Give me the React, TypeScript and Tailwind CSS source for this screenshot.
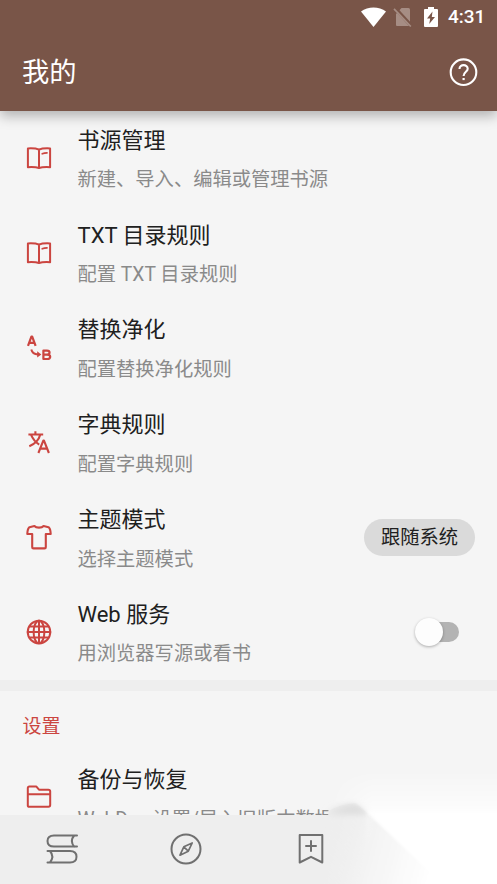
import type { ReactNode } from "react";

const line = {
  fill: "none",
  stroke: "currentColor",
  strokeWidth: 2,
  strokeLinejoin: "round" as const,
  strokeLinecap: "round" as const,
};

function BookIcon() {
  return (
    <svg width="26" height="26" viewBox="0 0 26 26" {...line}>
      <path d="M13 4.6C10 3.2 6 3.2 1.9 3.4V22.2C6 22 10 22 13 23C16 22 20 22 24.1 22.2V3.4C20 3.2 16 3.2 13 4.6ZM13 4.6V23" />
      <path d="M16.2 8.8C17.8 8.2 19.4 7.9 21 7.8" strokeWidth="1.7" />
    </svg>
  );
}

function ReplaceIcon() {
  return (
    <svg width="26" height="26" viewBox="0 0 26 26" {...line}>
      <path d="M2 10.8L5.4 1.6H6.2L9.6 10.8M3.2 7.8H8.4" strokeWidth="2.2" strokeLinecap="butt" />
      <path d="M5.3 14.6C6 17.5 8.3 19.4 12 19.6" strokeLinecap="butt" />
      <path d="M11.2 16.2L15.3 19.6L11.2 22.6Z" fill="currentColor" stroke="none" />
      <path d="M17.4 15.6V24M17.4 15.6H21C24.4 15.6 24.4 19.6 21 19.6H17.4M21 19.6C25.2 19.6 25.2 24 21.4 24H17.4" strokeWidth="2.2" />
    </svg>
  );
}

function TranslateIcon() {
  return (
    <svg width="26" height="26" viewBox="0 0 26 26" {...line} strokeLinecap="butt">
      <path d="M2.4 5.5H17.2M9.4 2.2V5.5M14.3 5.5C13 10.6 8.5 15 3.3 17.3M5.2 6.2C7 10.4 10 13.6 13.2 15.6" strokeWidth="2.1" />
      <path d="M12.4 24L17.3 11.6H18L22.9 24M14.2 19.6H21.2" strokeWidth="2.1" />
    </svg>
  );
}

function ShirtIcon() {
  return (
    <svg width="26" height="26" viewBox="0 0 26 26" {...line} strokeWidth="2.1">
      <path d="M8.4 2C10.2 4.2 15.8 4.2 17.6 2L22.5 3.2C23.8 4.2 24.6 7 24.7 10H19.8V23.2C19.8 24 19.4 24.4 18.6 24.4H7.4C6.6 24.4 6.2 24 6.2 23.2V10H1.3C1.4 7 2.2 4.2 3.5 3.2Z" />
    </svg>
  );
}

function GlobeIcon() {
  return (
    <svg width="26" height="26" viewBox="0 0 26 26" {...line}>
      <circle cx="13" cy="13" r="11.3" />
      <ellipse cx="13" cy="13" rx="5.4" ry="11.3" />
      <path d="M13 1.7V24.3M1.7 13H24.3M3.6 7.4H22.4M3.6 18.6H22.4" />
    </svg>
  );
}

function FolderIcon() {
  return (
    <svg width="26" height="26" viewBox="0 0 26 26" {...line}>
      <path d="M1.8 21.5V4.2C1.8 3.2 2.4 2.6 3.4 2.6H10.4L13 5.7H22.4C23.6 5.7 24.2 6.3 24.2 7.4V21.1C24.2 22.2 23.6 22.8 22.4 22.8H3.4C2.3 22.8 1.8 22.3 1.8 21.5ZM1.8 10.2H24.2" />
    </svg>
  );
}

function Row({ icon, title, sub, children }: { icon: ReactNode; title: string; sub: string; children?: ReactNode }) {
  return (
    <div className="flex h-[94.85px] shrink-0 items-center pl-[25.5px]">
      <div className="w-[52px] shrink-0 text-[#cb4540]">{icon}</div>
      <div className="flex-1 whitespace-nowrap">
        <div className="mt-[3.5px] h-[39.5px] text-[22px] leading-[39px] text-[#202020]">{title}</div>
        <div className="h-[38.5px] text-[19.3px] leading-[39px] text-[#8a8a8a]">{sub}</div>
      </div>
      {children}
    </div>
  );
}

function Header() {
  return (
    <header className="relative z-10 h-[110.5px] shrink-0 bg-[#795548] text-white shadow-[0_5px_12px_rgba(0,0,0,0.28)]">
      <div className="flex h-[34px] items-center pl-[361px]">
        <svg width="25" height="21" viewBox="0 0 25 21" fill="#fff">
          <path d="M0 4.5C7-1 18-1 25 4.5L12.5 20Z" />
        </svg>
        <svg className="ml-[7px]" width="20" height="22" viewBox="0 0 20 22">
          <path d="M3 8L8.5 2H15.5Q17 2 17 3.5V19Q17 20 16 20H4Q3 20 3 19Z" fill="#a68d84" />
          <path d="M1.5 1.5L19 20.5" stroke="#795548" strokeWidth="3.6" />
          <path d="M1 2.8L17.8 20.5" stroke="#a68d84" strokeWidth="1.7" />
        </svg>
        <svg className="ml-[11px]" width="14" height="22" viewBox="0 0 14 22">
          <path d="M4 1H10V3H13Q14 3 14 4V20Q14 21 13 21H1Q0 21 0 20V4Q0 3 1 3H4Z" fill="#fff" />
          <path d="M8.5 5.5L3 12.5H6.2L5.2 18L11 11H7.8Z" fill="#795548" />
        </svg>
        <span className="ml-[10px] text-[19px] font-medium leading-[34px]">4:31</span>
      </div>
      <div className="flex h-[76px] items-center justify-between pl-[22px] pr-[19px]">
        <h1 className="pt-[2px] text-[27.3px] leading-[40px]">我的</h1>
        <svg width="29" height="29" viewBox="0 0 29 29" fill="none" stroke="#fff" strokeWidth="2.1">
          <circle cx="14.5" cy="14.2" r="12.8" />
          <path d="M10.5 11C10.5 5.8 18.7 6 18.7 10.8C18.7 13.8 14.6 14 14.6 18" />
          <path d="M14.6 20V22.1" strokeWidth="2.2" />
        </svg>
      </div>
    </header>
  );
}

function BottomNav() {
  return (
    <nav className="flex h-[69.5px] shrink-0 items-center bg-[#eeeeee] pb-[1px] pl-[46px] text-[#707070]">
      <svg width="32" height="30" viewBox="0 0 32 30" {...line}>
        <path d="M31 1.5H8Q1.5 1.5 1.5 7T8 12.6H31M28.2 1.5Q23.5 7 28.2 12.6" />
        <path d="M1.5 17H24Q30.5 17 30.5 22.7T24 28.4H1.5M4 17Q8.7 22.7 4 28.4" />
      </svg>
      <svg className="ml-[92px]" width="32" height="32" viewBox="0 0 32 32" {...line}>
        <circle cx="16" cy="16" r="14.5" />
        <path d="M22.2 10L18.3 18.2L10 22.2L13.8 13.8ZM13.8 13.8L18.3 18.2" strokeWidth="1.7" />
      </svg>
      <svg className="ml-[95px]" width="28" height="32" viewBox="0 0 28 32" {...line}>
        <path d="M2.7 2H25.3V29.5L14 23.8L2.7 29.5Z" />
        <path d="M14 8V18M9 13H19" />
      </svg>
    </nav>
  );
}

function CornerGlow() {
  return (
    <svg className="pointer-events-none absolute bottom-0 right-0" width="197" height="124" viewBox="300 760 197 124">
      <defs>
        <linearGradient id="fade" gradientUnits="userSpaceOnUse" x1="400" y1="768" x2="400" y2="838">
          <stop offset="0" stopColor="#fff" stopOpacity="0" />
          <stop offset="0.4" stopColor="#fff" stopOpacity="0.45" />
          <stop offset="0.7" stopColor="#fff" stopOpacity="0.85" />
          <stop offset="1" stopColor="#fff" />
        </linearGradient>
        <linearGradient id="ramp" gradientUnits="userSpaceOnUse" x1="328" y1="0" x2="372" y2="0">
          <stop offset="0" stopColor="#fff" stopOpacity="0" />
          <stop offset="1" stopColor="#fff" />
        </linearGradient>
        <mask id="left" maskUnits="userSpaceOnUse" x="300" y="760" width="197" height="124">
          <rect x="300" y="760" width="197" height="124" fill="url(#ramp)" />
        </mask>
        <linearGradient id="side" gradientUnits="userSpaceOnUse" x1="325" y1="835" x2="435" y2="865">
          <stop offset="0" stopColor="#eeeeee" stopOpacity="0" />
          <stop offset="0.4" stopColor="#f3f3f3" />
          <stop offset="1" stopColor="#ffffff" />
        </linearGradient>
        <filter id="soft" x="-30%" y="-60%" width="160%" height="220%">
          <feGaussianBlur stdDeviation="3.5" />
        </filter>
        <filter id="edge" x="-20%" y="-20%" width="140%" height="140%">
          <feGaussianBlur stdDeviation="1.8" />
        </filter>
      </defs>
      <path d="M328.5 804H497V815H328.5Z" fill="#f5f5f5" />
      <path d="M328.5 815V811Q340 804 356 803L470 905H328.5Z" fill="#eeeeee" />
      <path d="M366 811H515V905H366Z" fill="#fcfcfc" filter="url(#edge)" />
      <path d="M325 818Q350 814 370 815L470 905H325Z" fill="url(#side)" filter="url(#edge)" />
      <path d="M329 812Q342 806 354 804Q362 806 369 814Q348 814 329 814Z" fill="#dcdcdc" filter="url(#soft)" />
      <g mask="url(#left)">
        <path d="M320 765H515V905H464L366 811Q358 803 350 802Q340 802 320 806Z" fill="url(#fade)" filter="url(#edge)" />
      </g>
    </svg>
  );
}

export default function App() {
  return (
    <div className="relative flex h-[884px] w-[497px] flex-col overflow-hidden bg-[#f5f5f5] font-[Roboto,'Noto_Sans_CJK_SC',sans-serif]">
      <Header />
      <main className="flex min-h-0 flex-1 flex-col overflow-hidden">
        <Row icon={<BookIcon />} title="书源管理" sub="新建、导入、编辑或管理书源" />
        <Row icon={<BookIcon />} title="TXT 目录规则" sub="配置 TXT 目录规则" />
        <Row icon={<ReplaceIcon />} title="替换净化" sub="配置替换净化规则" />
        <Row icon={<TranslateIcon />} title="字典规则" sub="配置字典规则" />
        <Row icon={<ShirtIcon />} title="主题模式" sub="选择主题模式">
          <button className="mr-[22px] h-[37px] w-[111px] rounded-full bg-[#dadada] text-[19.3px] leading-[38px] text-[#202020]">
            跟随系统
          </button>
        </Row>
        <Row icon={<GlobeIcon />} title="Web 服务" sub="用浏览器写源或看书">
          <div className="mr-[38px] flex h-[20px] w-[42px] items-center rounded-full bg-[#b3b3b3]">
            <div className="-ml-[2px] size-[28px] shrink-0 rounded-full bg-[#fdfdfd] shadow-[0_1px_3px_rgba(0,0,0,0.3)]" />
          </div>
        </Row>
        <div className="mt-[0.4px] h-[11px] shrink-0 bg-[#eeeeee]" />
        <div className="h-[59px] shrink-0 pl-[22.5px] pt-[17.5px] text-[19px] leading-[38px] text-[#cb4540]">设置</div>
        <Row icon={<FolderIcon />} title="备份与恢复" sub="WebDav 设置/导入旧版本数据" />
      </main>
      <BottomNav />
      <CornerGlow />
    </div>
  );
}
